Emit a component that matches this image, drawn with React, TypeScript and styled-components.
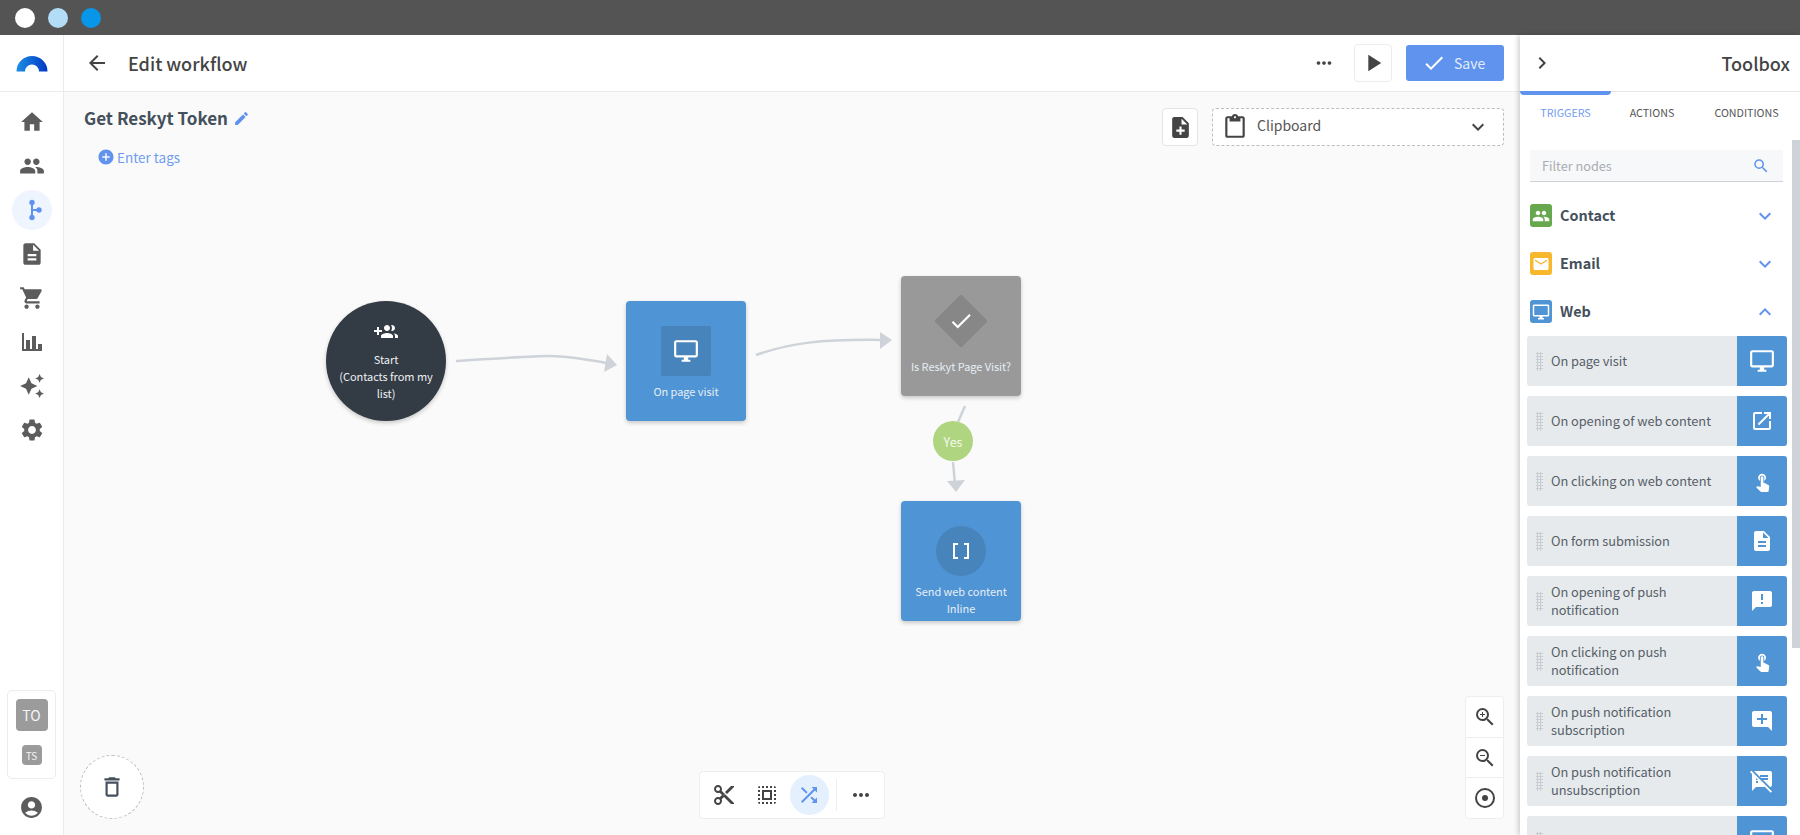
import React from 'react';
import styled, { createGlobalStyle } from 'styled-components';
import {
  MdAccountCircle, MdAddCircle, MdAddComment, MdAnnouncement, MdArrowBack, MdAutoAwesome, MdCheck,
  MdChevronRight, MdContentCut, MdContentPaste, MdDeleteOutline, MdDescription, MdOutlineDesktopWindows,
  MdEdit, MdEmail, MdHome, MdKeyboardArrowDown, MdKeyboardArrowUp, MdMoreHoriz, MdNoteAdd,
  MdOpenInNew, MdPeople, MdPlayArrow, MdSearch, MdSelectAll, MdSettings,
  MdShoppingCart, MdShuffle, MdSpeakerNotesOff, MdTouchApp, MdZoomIn, MdZoomOut,
} from 'react-icons/md';

const GlobalStyle = createGlobalStyle`
  html, body {
    margin: 0;
    height: 100%;
    overflow: hidden;
    background: #fff;
    font-family: "Noto Sans CJK SC", "Noto Sans", sans-serif;
    color: #444;
  }
  * { box-sizing: border-box; }
`;

const Page = styled.div`
  height: 835px;
  display: flex;
  flex-direction: column;
`;

const WindowBar = styled.div`
  height: 35px;
  flex: none;
  background: #545454;
  display: flex;
  align-items: center;
  gap: 13px;
  padding-left: 15px;
`;

const WindowDot = styled.span<{ $color: string }>`
  width: 20px;
  height: 20px;
  border-radius: 50%;
  background: ${(p) => p.$color};
`;

const Body = styled.div`
  flex: 1;
  min-height: 0;
  display: flex;
`;

const Sidebar = styled.aside`
  width: 64px;
  flex: none;
  border-right: 1px solid #ebebeb;
  display: flex;
  flex-direction: column;
  align-items: center;
  background: #fff;
`;

const LogoCell = styled.div`
  width: 63px;
  height: 57px;
  flex: none;
  border-bottom: 1px solid #ebebeb;
  display: flex;
  align-items: center;
  justify-content: center;
`;

const Nav = styled.nav`
  margin-top: 8px;
  display: flex;
  flex-direction: column;
`;

const NavItem = styled.div<{ $active?: boolean }>`
  width: 40px;
  height: 40px;
  margin: 2px 0;
  border-radius: 50%;
  display: flex;
  align-items: center;
  justify-content: center;
  font-size: 26px;
  color: ${(p) => (p.$active ? '#5f93ee' : '#5c5c5c')};
  background: ${(p) => (p.$active ? '#eff5fe' : 'transparent')};
`;

const WorkspaceBox = styled.div`
  margin-top: auto;
  width: 49px;
  height: 89px;
  border: 1px solid #ececec;
  border-radius: 5px;
  display: flex;
  flex-direction: column;
  align-items: center;
  padding-top: 8px;
  gap: 14px;
`;

const Tile = styled.div<{ $size: number }>`
  width: ${(p) => p.$size}px;
  height: ${(p) => p.$size}px;
  border-radius: 4px;
  background: #9b9b9b;
  color: #f4f4f4;
  font-size: ${(p) => (p.$size > 24 ? 14 : 10)}px;
  display: flex;
  align-items: center;
  justify-content: center;
`;

const UserCell = styled.div`
  height: 56px;
  display: flex;
  align-items: center;
  justify-content: center;
  font-size: 25px;
  color: #5c5c5c;
`;

const Main = styled.main`
  flex: 1;
  min-width: 0;
  display: flex;
  flex-direction: column;
`;

const Header = styled.header`
  height: 57px;
  flex: none;
  background: #fff;
  border-bottom: 1px solid #ebebeb;
  display: flex;
  align-items: center;
  padding: 0 16px 0 21px;
`;

const BackIcon = styled.div`
  font-size: 24px;
  display: flex;
  color: #444;
`;

const HeaderTitle = styled.h1`
  margin: 0 0 0 19px;
  font-size: 18px;
  line-height: 26px;
  font-weight: 500;
  color: #444;
`;

const HeaderActions = styled.div`
  margin-left: auto;
  display: flex;
  align-items: center;
`;

const MoreIcon = styled.div`
  font-size: 22px;
  display: flex;
  color: #444;
  margin-right: 19px;
`;

const PlayButton = styled.button`
  width: 38px;
  height: 38px;
  padding: 0;
  border: 1px solid #ececec;
  border-radius: 4px;
  background: #fff;
  color: #444;
  font-size: 28px;
  display: flex;
  align-items: center;
  justify-content: center;
  margin-right: 14px;
`;

const SaveButton = styled.button`
  width: 98px;
  height: 36px;
  padding: 0 0 0 16px;
  border: none;
  border-radius: 3px;
  background: #5f93ee;
  color: #e4edfc;
  font-family: inherit;
  font-size: 14px;
  display: flex;
  align-items: center;
  gap: 8px;
  svg { font-size: 24px; color: #fff; }
`;

const Canvas = styled.div`
  flex: 1;
  min-height: 0;
  position: relative;
  background: #fafafa;
  overflow: hidden;
`;

const CanvasHead = styled.div`
  display: flex;
  justify-content: space-between;
  padding: 16px 16px 0 20px;
`;

const TitleBlock = styled.div`
  display: flex;
  flex-direction: column;
`;

const WorkflowTitle = styled.div`
  display: flex;
  align-items: center;
  gap: 5px;
  font-size: 17px;
  line-height: 20px;
  font-weight: 700;
  color: #44505c;
  svg { font-size: 17px; color: #5f93ee; }
`;

const TagsRow = styled.div`
  margin: 18px 0 0 13px;
  display: flex;
  align-items: center;
  gap: 2px;
  font-size: 13.5px;
  line-height: 22px;
  color: #6f9cf0;
  svg { font-size: 18px; color: #5f93ee; }
`;

const ClipboardRow = styled.div`
  display: flex;
  gap: 14px;
`;

const NoteButton = styled.div`
  width: 36px;
  height: 38px;
  border: 1px solid #e4e4e4;
  border-radius: 4px;
  background: #fff;
  display: flex;
  align-items: center;
  justify-content: center;
  font-size: 25px;
  color: #444;
`;

const ClipboardBox = styled.div`
  width: 292px;
  height: 38px;
  border: 1px dashed #bdbdbd;
  border-radius: 4px;
  background: #fff;
  display: flex;
  align-items: center;
  padding: 0 13px 0 9px;
  gap: 9px;
  font-size: 14px;
  color: #555;
  > svg:first-child { font-size: 26px; color: #444; }
  > svg:last-child { font-size: 24px; color: #444; margin-left: auto; }
`;

const ClipboardLabel = styled.span`
  line-height: 20px;
  margin-top: -4px;
`;

const Edges = styled.svg`
  position: absolute;
  inset: 0;
  width: 100%;
  height: 100%;
  pointer-events: none;
`;

const NodeBox = styled.div<{ $x: number; $y: number; $color: string; $round?: boolean }>`
  position: absolute;
  left: ${(p) => p.$x}px;
  top: ${(p) => p.$y}px;
  width: 120px;
  height: 120px;
  border-radius: ${(p) => (p.$round ? '50%' : '4px')};
  background: ${(p) => p.$color};
  box-shadow: 0 2px 4px rgba(0, 0, 0, 0.2);
  display: flex;
  flex-direction: column;
  align-items: center;
  color: #e6eef6;
  font-size: 11px;
  letter-spacing: -0.05px;
  line-height: 17px;
  text-align: center;
`;

const NodeIcon = styled.div<{ $shape: 'square' | 'circle' }>`
  width: 50px;
  height: 50px;
  margin-top: 25px;
  flex: none;
  border-radius: ${(p) => (p.$shape === 'circle' ? '50%' : '2px')};
  background: #4784bc;
  display: flex;
  align-items: center;
  justify-content: center;
  font-size: 26px;
  color: #fff;
`;

const DiamondWrap = styled.div`
  position: relative;
  width: 54px;
  height: 54px;
  margin-top: 18px;
  flex: none;
  display: flex;
  align-items: center;
  justify-content: center;
  font-size: 26px;
  color: #fff;
  &::before {
    content: '';
    position: absolute;
    inset: 8px;
    transform: rotate(45deg);
    background: #878787;
    border-radius: 2px;
  }
  svg { position: relative; }
`;

const NodeLabel = styled.div<{ $top: number }>`
  margin-top: ${(p) => p.$top}px;
  padding: 0 6px;
`;

const StartIcon = styled.div`
  margin-top: 19px;
  display: flex;
`;

const StartLabel = styled.div`
  margin-top: 7px;
  padding: 0 12px;
  color: #eef0f2;
`;

const YesBadge = styled.div`
  position: absolute;
  left: 869px;
  top: 329px;
  width: 40px;
  height: 40px;
  border-radius: 50%;
  background: #b0d580;
  color: #f3f8ea;
  font-size: 12.5px;
  display: flex;
  align-items: center;
  justify-content: center;
`;

const TrashDrop = styled.div`
  position: absolute;
  left: 16px;
  bottom: 16px;
  width: 64px;
  height: 64px;
  border: 1px dashed #bdbdbd;
  border-radius: 50%;
  background: #fff;
  display: flex;
  align-items: center;
  justify-content: center;
  font-size: 26px;
  color: #44505c;
`;

const BottomTools = styled.div`
  position: absolute;
  left: 635px;
  bottom: 16px;
  width: 186px;
  height: 48px;
  background: #fff;
  border: 1px solid #eee;
  border-radius: 4px;
  display: flex;
  align-items: center;
  padding-left: 4px;
`;

const ToolButton = styled.div<{ $active?: boolean }>`
  width: 40px;
  height: 40px;
  margin-right: 3px;
  border-radius: 50%;
  display: flex;
  align-items: center;
  justify-content: center;
  font-size: 24px;
  color: ${(p) => (p.$active ? '#5f93ee' : '#444')};
  background: ${(p) => (p.$active ? '#e5f0fe' : 'transparent')};
`;

const ToolDivider = styled.div`
  width: 1px;
  height: 32px;
  background: #eee;
  margin: 0 4px 0 4px;
`;

const ZoomTools = styled.div`
  position: absolute;
  right: 16px;
  bottom: 16px;
  width: 39px;
  height: 123px;
  background: #fff;
  border: 1px solid #eee;
  border-radius: 4px;
  display: flex;
  flex-direction: column;
`;

const ZoomCell = styled.div`
  flex: 1;
  display: flex;
  align-items: center;
  justify-content: center;
  font-size: 24px;
  color: #444;
  & + & { border-top: 1px solid #eee; }
`;

const Toolbox = styled.aside`
  width: 280px;
  flex: none;
  position: relative;
  z-index: 2;
  background: #fff;
  box-shadow: -2px 0 5px rgba(0, 0, 0, 0.18);
  display: flex;
  flex-direction: column;
  overflow: hidden;
`;

const ToolboxHead = styled.div`
  height: 57px;
  flex: none;
  border-bottom: 1px solid #e6e6e6;
  display: flex;
  align-items: center;
  justify-content: space-between;
  padding: 0 10px 0 10px;
  font-size: 18px;
  font-weight: 500;
  color: #444;
  svg { font-size: 24px; }
`;

const Tabs = styled.div`
  height: 48px;
  flex: none;
  display: flex;
  font-size: 10.7px;
  color: #555;
`;

const Tab = styled.div<{ $active?: boolean; $width: number }>`
  width: ${(p) => p.$width}px;
  flex: none;
  position: relative;
  display: flex;
  justify-content: center;
  padding-top: 11px;
  line-height: 20px;
  color: ${(p) => (p.$active ? '#6f9cf0' : '#555')};
  ${(p) =>
    p.$active &&
    `&::before {
      content: '';
      position: absolute;
      left: 0;
      right: 0;
      top: -1px;
      height: 4px;
      background: #5f93ee;
      border-radius: 0 0 4px 4px;
    }`}
`;

const Scrollbar = styled.div`
  position: absolute;
  right: 0;
  top: 105px;
  width: 8px;
  height: 508px;
  background: #ced2d9;
`;

const FilterBox = styled.div`
  margin: 10px 17px 0 10px;
  height: 32px;
  flex: none;
  background: #f7f8fa;
  border-bottom: 1px solid #ced2d9;
  display: flex;
  align-items: center;
  justify-content: space-between;
  padding: 0 13px 0 12px;
  font-size: 12.7px;
  color: #a9adb1;
  svg { font-size: 18px; color: #5f93ee; }
`;

const Section = styled.div<{ $top: number }>`
  margin: ${(p) => p.$top}px 17px 0 10px;
  height: 23px;
  flex: none;
  display: flex;
  align-items: center;
  font-size: 14.4px;
  font-weight: 700;
  line-height: 21px;
  color: #44505c;
  > svg { margin-left: auto; margin-right: 6px; font-size: 24px; color: #5f93ee; }
`;

const SectionLabel = styled.span`
  margin-top: -2px;
`;

const SectionIcon = styled.span<{ $color: string }>`
  width: 22px;
  height: 23px;
  margin-right: 8px;
  border-radius: 3px;
  background: ${(p) => p.$color};
  color: #fff;
  font-size: 18px;
  display: flex;
  align-items: center;
  justify-content: center;
`;

const ItemList = styled.div`
  margin: 13px 13px 0 7px;
  display: flex;
  flex-direction: column;
  gap: 10px;
`;

const Item = styled.div`
  height: 50px;
  flex: none;
  display: flex;
  background: #e7eaed;
  border-radius: 3px;
  overflow: hidden;
`;

const Grip = styled.span`
  width: 7px;
  height: 19px;
  margin: 0 8px 0 9px;
  flex: none;
  align-self: center;
  background-image: radial-gradient(circle, #c9ccd0 1px, transparent 1.2px);
  background-size: 3px 3px;
`;

const ItemLabel = styled.div`
  flex: 1;
  align-self: center;
  padding-right: 18px;
  font-size: 12.8px;
  letter-spacing: -0.05px;
  line-height: 18px;
  color: #566068;
`;

const ItemIcon = styled.div`
  width: 50px;
  flex: none;
  background: #4f94d4;
  color: #fff;
  font-size: 24px;
  display: flex;
  align-items: center;
  justify-content: center;
`;

// logo + the icons material doesn't have in the right shape
const Logo = () => (
  <svg width="32" height="17" viewBox="0 0 32 17">
    <defs>
      <linearGradient id="logoGrad" x1="0" x2="1" y1="0" y2="0">
        <stop offset="0" stopColor="#1f8fe5" />
        <stop offset="1" stopColor="#0038c4" />
      </linearGradient>
    </defs>
    <path d="M0.5 16.5a15.5 15.5 0 0 1 31 0h-8.5a7 7 0 0 0-14 0z" fill="url(#logoGrad)" />
  </svg>
);

const WorkflowIcon = () => (
  <svg width="26" height="26" viewBox="0 0 26 26" fill="#5f93ee">
    <rect x="12" y="6" width="2" height="15" />
    <rect x="12" y="12" width="8" height="2" />
    <circle cx="13" cy="5.5" r="2.7" />
    <circle cx="13" cy="20.5" r="2.7" />
    <circle cx="20" cy="13" r="2.7" />
  </svg>
);

const ChartIcon = () => (
  <svg width="22" height="20" viewBox="0 0 22 20" fill="#5c5c5c">
    <rect x="1" y="1" width="2" height="18" />
    <rect x="1" y="17" width="20" height="2" />
    <rect x="5" y="8" width="4" height="10" />
    <rect x="11" y="4" width="4" height="14" />
    <rect x="17" y="12" width="4" height="6" />
  </svg>
);

const BracketsIcon = () => (
  <svg width="18" height="16" viewBox="0 0 18 16" fill="none" stroke="#fff" strokeWidth="2">
    <path d="M6 1H2v14h4M12 1h4v14h-4" />
  </svg>
);

const RecenterIcon = () => (
  <svg width="22" height="22" viewBox="0 0 22 22" fill="none" stroke="#444" strokeWidth="2">
    <circle cx="11" cy="11" r="9" />
    <circle cx="11" cy="11" r="3" fill="#444" stroke="none" />
  </svg>
);

const GroupAddIcon = () => (
  <svg width="24" height="24" viewBox="0 0 24 24" fill="#fff">
    <path d="M8 10H5V7H3v3H0v2h3v3h2v-3h3v-2zm10 1c1.66 0 2.99-1.34 2.99-3S19.66 5 18 5c-.32 0-.63.05-.91.14.57.81.9 1.79.9 2.86s-.34 2.04-.9 2.86c.28.09.59.14.91.14zm-5 0c1.66 0 2.99-1.34 2.99-3S14.66 5 13 5s-3 1.34-3 3 1.34 3 3 3zm6.62 2.16c.83.73 1.38 1.66 1.38 2.84v2h3v-2c0-1.54-2.37-2.49-4.38-2.84zM13 13c-2 0-6 1-6 3v2h12v-2c0-2-4-3-6-3z" />
  </svg>
);

const navItems = [
  { icon: <MdHome /> },
  { icon: <MdPeople /> },
  { icon: <WorkflowIcon />, active: true },
  { icon: <MdDescription /> },
  { icon: <MdShoppingCart /> },
  { icon: <ChartIcon /> },
  { icon: <MdAutoAwesome /> },
  { icon: <MdSettings /> },
];

const webItems = [
  { label: 'On page visit', icon: <MdOutlineDesktopWindows size={26} /> },
  { label: 'On opening of web content', icon: <MdOpenInNew /> },
  { label: 'On clicking on web content', icon: <MdTouchApp size={21} /> },
  { label: 'On form submission', icon: <MdDescription /> },
  { label: 'On opening of push notification', icon: <MdAnnouncement /> },
  { label: 'On clicking on push notification', icon: <MdTouchApp size={21} /> },
  { label: 'On push notification subscription', icon: <MdAddComment /> },
  { label: 'On push notification unsubscription', icon: <MdSpeakerNotesOff /> },
  { label: '', icon: <MdOutlineDesktopWindows size={26} /> },
];

const App: React.FC = () => {
  return (
    <Page>
      <GlobalStyle />
      <WindowBar>
        <WindowDot $color="#ffffff" />
        <WindowDot $color="#b3dcf6" />
        <WindowDot $color="#0896e8" />
      </WindowBar>
      <Body>
        <Sidebar>
          <LogoCell><Logo /></LogoCell>
          <Nav>
            {navItems.map((item, i) => (
              <NavItem key={i} $active={item.active}>{item.icon}</NavItem>
            ))}
          </Nav>
          <WorkspaceBox>
            <Tile $size={32}>TO</Tile>
            <Tile $size={20}>TS</Tile>
          </WorkspaceBox>
          <UserCell><MdAccountCircle /></UserCell>
        </Sidebar>

        <Main>
          <Header>
            <BackIcon><MdArrowBack /></BackIcon>
            <HeaderTitle>Edit workflow</HeaderTitle>
            <HeaderActions>
              <MoreIcon><MdMoreHoriz /></MoreIcon>
              <PlayButton><MdPlayArrow /></PlayButton>
              <SaveButton><MdCheck />Save</SaveButton>
            </HeaderActions>
          </Header>
          <Canvas>
            <CanvasHead>
              <TitleBlock>
                <WorkflowTitle>Get Reskyt Token <MdEdit /></WorkflowTitle>
                <TagsRow><MdAddCircle />Enter tags</TagsRow>
              </TitleBlock>
              <ClipboardRow>
                <NoteButton><MdNoteAdd /></NoteButton>
                <ClipboardBox>
                  <MdContentPaste />
                  <ClipboardLabel>Clipboard</ClipboardLabel>
                  <MdKeyboardArrowDown />
                </ClipboardBox>
              </ClipboardRow>
            </CanvasHead>

            <Edges>
              <g transform="translate(-64 -92)" fill="#ced3da" stroke="none">
                <path d="M456 361C490 359 530 356 550 356C570 356 590 360 612 364" fill="none" stroke="#ced3da" strokeWidth="2.5" />
                <path d="M607 354L617 365L604 372Z" />
                <path d="M756 355C790 343 820 339 885 340" fill="none" stroke="#ced3da" strokeWidth="2.5" />
                <path d="M880 332L892 340L880 349Z" />
                <path d="M965 406L958 422" fill="none" stroke="#ced3da" strokeWidth="2.5" />
                <path d="M953 462L955 484" fill="none" stroke="#ced3da" strokeWidth="2.5" />
                <path d="M947 481L965 480L956 492Z" />
              </g>
            </Edges>

            <NodeBox $x={262} $y={209} $color="#333b45" $round>
              <StartIcon><GroupAddIcon /></StartIcon>
              <StartLabel>Start<br />(Contacts from my list)</StartLabel>
            </NodeBox>
            <NodeBox $x={562} $y={209} $color="#4f94d4">
              <NodeIcon $shape="square"><MdOutlineDesktopWindows /></NodeIcon>
              <NodeLabel $top={7}>On page visit</NodeLabel>
            </NodeBox>
            <NodeBox $x={837} $y={184} $color="#999999">
              <DiamondWrap><MdCheck /></DiamondWrap>
              <NodeLabel $top={10}>Is Reskyt Page Visit?</NodeLabel>
            </NodeBox>
            <NodeBox $x={837} $y={409} $color="#4f94d4">
              <NodeIcon $shape="circle"><BracketsIcon /></NodeIcon>
              <NodeLabel $top={7}>Send web content<br />Inline</NodeLabel>
            </NodeBox>
            <YesBadge>Yes</YesBadge>

            <TrashDrop><MdDeleteOutline /></TrashDrop>
            <BottomTools>
              <ToolButton><MdContentCut /></ToolButton>
              <ToolButton><MdSelectAll /></ToolButton>
              <ToolButton $active><MdShuffle /></ToolButton>
              <ToolDivider />
              <ToolButton><MdMoreHoriz /></ToolButton>
            </BottomTools>
            <ZoomTools>
              <ZoomCell><MdZoomIn /></ZoomCell>
              <ZoomCell><MdZoomOut /></ZoomCell>
              <ZoomCell><RecenterIcon /></ZoomCell>
            </ZoomTools>
          </Canvas>
        </Main>

        <Toolbox>
          <ToolboxHead><MdChevronRight />Toolbox</ToolboxHead>
          <Tabs>
            <Tab $active $width={91}>TRIGGERS</Tab>
            <Tab $width={82}>ACTIONS</Tab>
            <Tab $width={107}>CONDITIONS</Tab>
          </Tabs>
          <Scrollbar />
          <FilterBox>Filter nodes<MdSearch /></FilterBox>
          <Section $top={22}>
            <SectionIcon $color="#67a84f"><MdPeople /></SectionIcon>
            <SectionLabel>Contact</SectionLabel>
            <MdKeyboardArrowDown />
          </Section>
          <Section $top={25}>
            <SectionIcon $color="#f8b82e"><MdEmail /></SectionIcon>
            <SectionLabel>Email</SectionLabel>
            <MdKeyboardArrowDown />
          </Section>
          <Section $top={25}>
            <SectionIcon $color="#4f94d4"><MdOutlineDesktopWindows /></SectionIcon>
            <SectionLabel>Web</SectionLabel>
            <MdKeyboardArrowUp />
          </Section>
          <ItemList>
            {webItems.map((item, i) => (
              <Item key={i}>
                <Grip />
                <ItemLabel>{item.label}</ItemLabel>
                <ItemIcon>{item.icon}</ItemIcon>
              </Item>
            ))}
          </ItemList>
        </Toolbox>
      </Body>
    </Page>
  );
};

export default App;
